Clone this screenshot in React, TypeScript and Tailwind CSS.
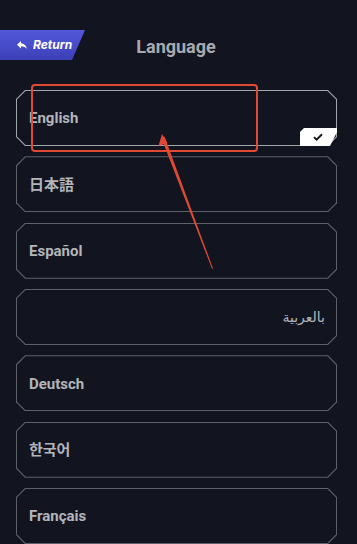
const languages = [
  { label: 'English', selected: true },
  { label: '日本語' },
  { label: 'Español' },
  { label: 'بالعربية', rtl: true },
  { label: 'Deutsch' },
  { label: '한국어' },
  { label: 'Français' },
]

function ReplyIcon() {
  return (
    <svg viewBox="0 0 24 24" className="h-[12px] w-[12px] fill-white">
      <path d="M10 8.5V4L2 11.5 10 19v-4.6c5.3 0 9 1.7 12 5.6-1.2-5.6-4.6-10.6-12-11.5z" />
    </svg>
  )
}

function LanguageCard({ label, selected, rtl }: { label: string; selected?: boolean; rtl?: boolean }) {
  return (
    <div className="relative h-[56px]">
      <div
        className={`h-full p-px [clip-path:polygon(9px_0,calc(100%_-_9px)_0,100%_9px,100%_calc(100%_-_9px),calc(100%_-_9px)_100%,9px_100%,0_calc(100%_-_9px),0_9px)] ${
          selected ? 'bg-[#a4a6ad]' : 'bg-[#5d6069]'
        }`}
      >
        <div
          className={`flex h-full items-center bg-[#121420] pt-px [clip-path:polygon(8.6px_0,calc(100%_-_8.6px)_0,100%_8.6px,100%_calc(100%_-_8.6px),calc(100%_-_8.6px)_100%,8.6px_100%,0_calc(100%_-_8.6px),0_8.6px)] ${
            rtl ? 'justify-end pr-[11px]' : 'pl-[12px]'
          }`}
        >
          <span
            className={`text-[#b4b5b9] ${rtl ? 'text-[14px] font-medium' : 'text-[15px] font-bold'}`}
            dir={rtl ? 'rtl' : undefined}
          >
            {label}
          </span>
        </div>
      </div>
      {selected && (
        <div className="absolute bottom-0 right-0 flex h-[18px] w-[37px] items-center justify-center bg-white pr-[2px] [clip-path:polygon(4px_0,100%_0,100%_4px,calc(100%_-_7px)_100%,0_100%,0_4px)]">
          <svg viewBox="0 0 12 10" className="h-[8px] w-[10px]">
            <path d="M1 5.2 4.2 8.3 11 1.6" fill="none" stroke="#15161d" strokeWidth="2.4" strokeLinejoin="miter" />
          </svg>
        </div>
      )}
    </div>
  )
}

export default function App() {
  return (
    <div
      className="relative min-h-screen w-full overflow-hidden bg-[#121420] pt-[30px]"
      style={{ fontFamily: 'Roboto, "Noto Sans", "DejaVu Sans", "Noto Sans CJK JP", "Noto Sans CJK KR", sans-serif' }}
    >
      {/* Header */}
      <div className="grid h-[30px] grid-cols-[1fr_auto_1fr] items-center">
        <div className="flex">
          <button className="flex h-[30px] w-[85px] items-center gap-[5px] bg-gradient-to-b from-[#5358dc] to-[#3c40b6] pl-[16px] [clip-path:polygon(0_0,100%_0,calc(100%_-_13px)_100%,0_100%)]">
            <ReplyIcon />
            <span className="font-['Inter'] text-[12px] font-bold italic text-white">Return</span>
          </button>
        </div>
        <h1 className="pr-[5px] pt-[2px] text-[18px] font-bold text-[#a9aaaf]">Language</h1>
        <div />
      </div>

      {/* Language list */}
      <div className="ml-[16px] mt-[30px] flex w-[321px] flex-col gap-[10.33px]">
        {languages.map((l) => (
          <LanguageCard key={l.label} {...l} />
        ))}
      </div>

      {/* Annotation overlay */}
      <div className="pointer-events-none absolute left-[31px] top-[84px] h-[68px] w-[227px] rounded-[4px] border-2 border-[#e04a33]" />
      <svg className="pointer-events-none absolute left-0 top-0 h-[544px] w-[357px]" viewBox="0 0 357 544">
        <polygon points="161.2,137.5 164.6,136.8 213,268.5 212,268.8" fill="#e04a33" />
        <polygon points="162,134 158.5,146 167.5,143" fill="#e04a33" />
      </svg>
    </div>
  )
}
